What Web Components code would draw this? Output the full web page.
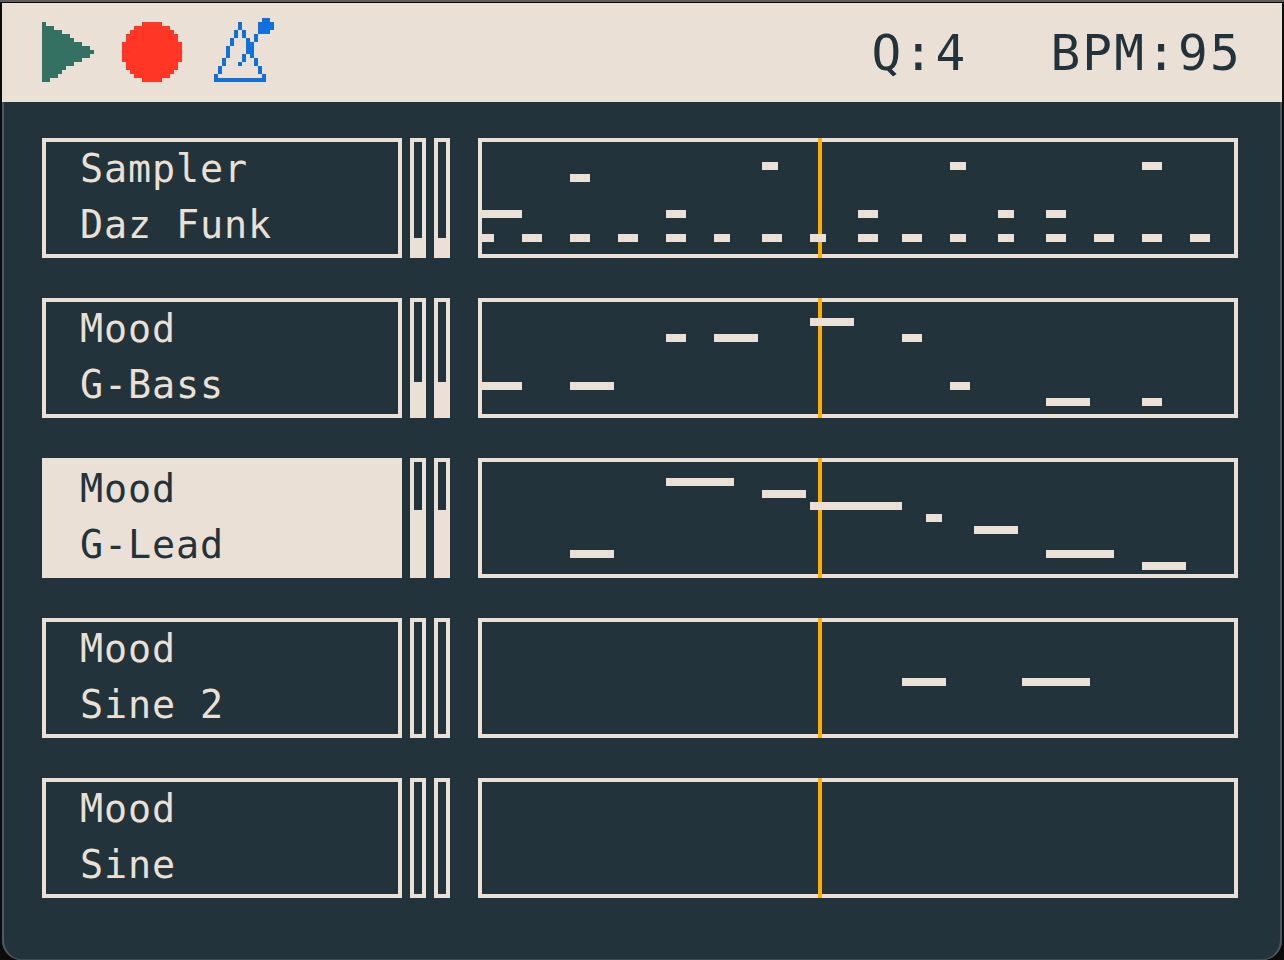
<!DOCTYPE html>
<html lang="en">
<head>
<meta charset="utf-8">
<title>Groovebox</title>
<style>
html,body{margin:0;height:100%;background:#141414;overflow:hidden}
</style>
</head>
<body>
<groove-box></groove-box>
<script>
const define=(name,html,fn)=>customElements.define(name,class extends HTMLElement{
  connectedCallback(){
    if(this.shadowRoot)return;
    const root=this.attachShadow({mode:'open'});
    root.innerHTML=html;
    if(fn)fn(this,root);
  }
});

define('play-icon',`<style>:host{display:block;width:52px;height:60px}svg{display:block}</style>
<svg width="52" height="60" fill="#357163"><path d="M0 0h4v4h8v4h8v4h8v4h4v4h8v4h8v4h4v4h-4v4h-8v4h-8v4h-8v4h-4v4h-4v4h-8v4h-8v4h-4z"/></svg>`);

define('record-icon',`<style>:host{display:block;width:60px;height:60px}svg{display:block}</style>
<svg width="60" height="60" fill="#ff3525"><path d="M20 0h20v4h8v4h4v4h4v8h4v20h-4v8h-4v4h-4v4h-8v4h-20v-4h-8v-4h-4v-4h-4v-8h-4v-20h4v-8h4v-4h4v-4h8z"/></svg>`);

define('metronome-icon',`<style>:host{display:block;width:60px;height:64px}svg{display:block}</style>
<svg width="60" height="64" fill="#1070dc"><path d="M24 4h4v8h-4zM20 12h4v8h-4zM16 20h4v8h-4zM12 28h4v12h-4zM8 40h4v8h-4zM4 48h4v8h-4zM0 56h4v4h44v-4h4v8h-52zM28 12h4v8h-4zM32 20h4v4h4v16h-4v-4h-4zM40 40h4v8h-4zM44 48h4v8h-4zM24 44h4v4h-4zM28 36h4v8h-4zM40 16h4v8h-4zM48 0h8v4h4v8h-4v4h-12v-12h4z"/></svg>`);

define('transport-bar',`<style>
:host{display:flex;align-items:flex-start;box-sizing:border-box;height:99px;padding:19px 40px 0 40px;background:#eae0d5;color:#22333b}
.play,.rec{margin-right:28px}.rec{margin-right:32px}
metronome-icon{margin-top:-4px}
.spacer{flex:1}
.readout{font:49.4px/62px "DejaVu Sans Mono",monospace;letter-spacing:2.2px;white-space:pre}
.q{margin-right:83px}
</style><play-icon class="play"></play-icon><record-icon class="rec"></record-icon><metronome-icon></metronome-icon><span class="spacer"></span><span class="readout q">Q:4</span><span class="readout">BPM:95</span>`);

define('track-label',`<style>
:host{display:block;box-sizing:border-box;width:360px;height:120px;padding:0 0 0 34px;border:4px solid #eae0d5;color:#eae0d5;font:38.4px/56px "DejaVu Sans Mono",monospace;letter-spacing:.88px;white-space:pre}
:host([selected]){background:#eae0d5;color:#22333b}
div{height:56px;line-height:54px}
</style><div><slot name="engine"></slot></div><div><slot name="preset"></slot></div>`);

define('level-meter',`<style>
:host{display:flex;align-items:flex-end;box-sizing:border-box;width:16px;height:120px;border:4px solid #eae0d5}
i{display:block;width:8px;background:#eae0d5}
</style><i></i>`,(h,r)=>{r.querySelector('i').style.height=h.getAttribute('level')+'px'});

define('piano-roll',`<style>
:host{display:block;width:760px;height:120px}svg{display:block}
</style><svg width="760" height="120" fill="#eae0d5"><rect x="2" y="2" width="756" height="116" fill="none" stroke="#eae0d5" stroke-width="4"/><rect x="340" width="4" height="120" fill="#ffab00"/><g></g></svg>`,(h,r)=>{
  // notes: "y:x-x2,x-x2;y:..." in roll coordinates
  r.querySelector('g').innerHTML=(h.getAttribute('notes')||'').split(';').filter(Boolean).map(row=>{
    const [y,list]=row.split(':');
    return list.split(',').map(s=>{const [a,b]=s.split('-');return `<rect x="${a}" y="${y}" width="${b-a}" height="8"/>`}).join('');
  }).join('');
});

const tracks=[
 ['Sampler','Daz Funk',16,'24:284-300,472-488,664-684;36:92-112;72:4-44,188-208,380-400,520-536,568-588;96:4-16,44-64,92-112,140-160,188-208,236-252,284-304,332-348,380-400,424-444,472-488,520-536,568-588,616-636,664-684,712-732'],
 ['Mood','G-Bass',32,'20:332-376;36:188-208,236-280,424-444;84:4-44,92-136,472-492;100:568-612,664-684'],
 ['Mood','G-Lead',64,'20:188-256;32:284-328;44:332-424;56:448-464;68:496-540;92:92-136,568-636;104:664-708',true],
 ['Mood','Sine 2',0,'60:424-468,544-612'],
 ['Mood','Sine',0,'']
];

define('track-list',`<style>
:host{display:flex;flex-direction:column;gap:40px;padding:36px 0 0 40px}
.track{display:flex;height:120px}
level-meter{margin-left:8px}
piano-roll{margin-left:28px}
</style>`,(h,r)=>{
  r.innerHTML+=tracks.map(([e,p,l,n,s])=>`<div class="track"><track-label${s?' selected':''}><span slot="engine">${e}</span><span slot="preset">${p}</span></track-label><level-meter level="${l}"></level-meter><level-meter level="${l}"></level-meter><piano-roll notes="${n}"></piano-roll></div>`).join('');
});

define('groove-box',`<style>
:host{display:block;box-sizing:border-box;width:1284px;height:960px;padding:2px 2px 0;background:linear-gradient(#5f5c5e 0 2px,#0c0c0d 2px)}
.window{box-sizing:border-box;height:958px;background:#22333b;border-top:1px solid #050505;border-radius:0 0 20px 20px;box-shadow:inset 2px 0 #4c5960,inset -2px 0 #4c5960,inset 0 -1px #3d4b53;overflow:hidden}
</style><div class="window"><transport-bar></transport-bar><track-list></track-list></div>`);
</script>
</body>
</html>
